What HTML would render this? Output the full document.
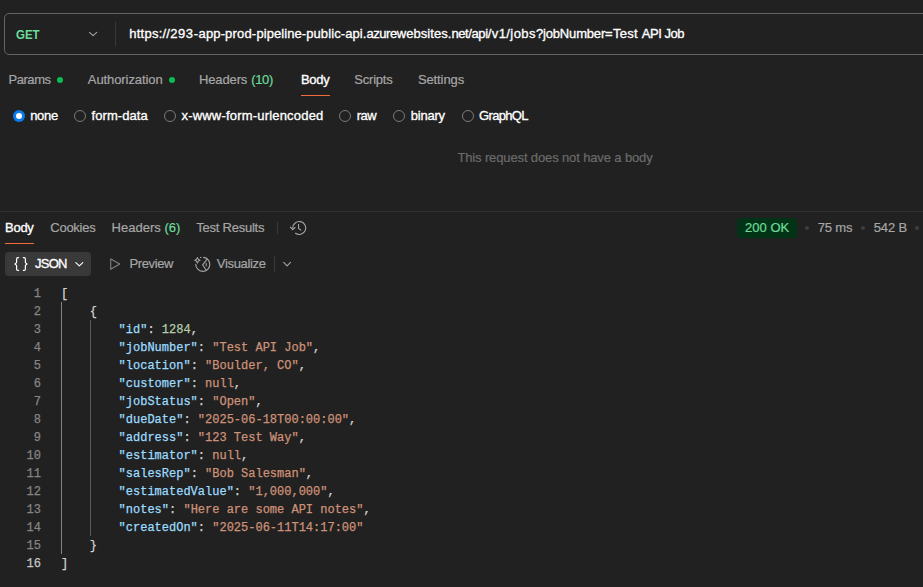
<!DOCTYPE html>
<html lang="en">
<head>
<meta charset="utf-8">
<title>Request</title>
<style>
*{box-sizing:border-box;margin:0;padding:0}
html,body{width:923px;height:587px;overflow:hidden;background:#212121}
body{position:relative;font-family:"Liberation Sans",sans-serif;font-size:13px;color:#a6a6a6}
.t{position:absolute;white-space:nowrap;line-height:16px;height:16px;-webkit-text-stroke:.2px}
.w{color:#ffffff;-webkit-text-stroke:.33px}
.g{color:#6bdd9a}
.urlbar{position:absolute;left:4px;top:13px;width:940px;height:42px;border:1px solid #646464;border-radius:5px}
.vdiv{position:absolute;width:1px;background:#393939}
.dot{position:absolute;width:6px;height:6px;border-radius:50%;background:#0cbb52}
.ul{position:absolute;height:1px;background:#f26b3a}
.radio{position:absolute;width:12px;height:12px;border-radius:50%;border:1px solid #7a7a7a}
.radio.on{border:none;background:#097bed}
.radio.on::after{content:"";position:absolute;left:3px;top:3px;width:6px;height:6px;border-radius:50%;background:#fff}
.hr{position:absolute;left:0;width:923px;height:1px;background:#303030}
.sdot{position:absolute;width:4px;height:4px;border-radius:50%;background:#3f3f3f}
.badge{position:absolute;left:737px;top:218px;width:60px;height:20px;border-radius:4px;background:#033316}
.jbtn{position:absolute;left:5px;top:252px;width:86px;height:24px;border-radius:4px;background:#393939}
svg{position:absolute;overflow:visible}
.code{position:absolute;left:0;top:285px;font-family:"Liberation Mono",monospace;font-size:12px;line-height:18px;-webkit-text-stroke:.25px}
.ln.cur{color:#c6c6c6}
.ln{position:absolute;left:0;width:41px;text-align:right;color:#858585;height:18px;white-space:pre}
.cl{position:absolute;left:61px;height:18px;white-space:pre;color:#d4d4d4}
.k{color:#9cdcfe}.s{color:#ce9178}.n{color:#b5cea8}.p{color:#d4d4d4}
.guide{position:absolute;width:1px;background:#404040}
</style>
</head>
<body>
<div class="urlbar"></div>
<div class="t g" id="get" style="left:16.3px;top:27px;font-weight:bold;-webkit-text-stroke:0;transform:scaleX(.885);transform-origin:0 0">GET</div>
<div class="vdiv" style="left:115px;top:22px;height:24px"></div>
<div class="t w" id="url" style="left:129.3px;top:26px;white-space:pre"><span style="letter-spacing:0.234px">https://</span><span style="letter-spacing:0.592px">293-</span><span style="letter-spacing:0.117px">app-</span><span style="letter-spacing:0.188px">prod-</span><span style="letter-spacing:0.072px">pipeline-</span><span style="letter-spacing:0.100px">public-</span><span style="letter-spacing:0.058px">api.</span><span style="letter-spacing:-0.446px">azure</span><span style="letter-spacing:0.066px">websites.</span><span style="letter-spacing:-0.459px">net</span><span style="letter-spacing:-0.342px">/api</span><span style="letter-spacing:0.385px">/v1</span><span style="letter-spacing:0.446px">/jobs</span><span style="letter-spacing:-0.173px">?jobNumber</span><span style="letter-spacing:0.279px">=Test </span><span style="letter-spacing:-0.476px">API Job</span></div>

<div class="t" id="t1" style="left:8.4px;top:72px;letter-spacing:-0.42px">Params</div>
<div class="dot" style="left:57px;top:77px"></div>
<div class="t" id="t2" style="left:87.8px;top:72px;letter-spacing:-0.08px">Authorization</div>
<div class="dot" style="left:169px;top:77px"></div>
<div class="t" id="t3" style="left:199px;top:72px;letter-spacing:-0.13px">Headers <span class="g" style="letter-spacing:-.4px;margin-left:.6px">(10)</span></div>
<div class="t w" id="t4" style="left:301px;top:72px;letter-spacing:-0.3px">Body</div>
<div class="ul" style="left:301px;top:95px;width:29px"></div>
<div class="t" id="t5" style="left:354.3px;top:72px;letter-spacing:-0.22px">Scripts</div>
<div class="t" id="t6" style="left:417.9px;top:72px;letter-spacing:-0.1px">Settings</div>

<div class="radio on" style="left:13px;top:110px"></div>
<div class="t w" id="r1" style="left:30.2px;top:108px;letter-spacing:-0.3px">none</div>
<div class="radio" style="left:74px;top:110px"></div>
<div class="t w" id="r2" style="left:91.6px;top:108px;letter-spacing:0.07px">form-data</div>
<div class="radio" style="left:164px;top:110px"></div>
<div class="t w" id="r3" style="left:181.5px;top:108px;letter-spacing:0.19px">x-www-form-urlencoded</div>
<div class="radio" style="left:339px;top:110px"></div>
<div class="t w" id="r4" style="left:356.8px;top:108px;letter-spacing:-0.6px">raw</div>
<div class="radio" style="left:393px;top:110px"></div>
<div class="t w" id="r5" style="left:410.8px;top:108px;letter-spacing:-0.24px">binary</div>
<div class="radio" style="left:462px;top:110px"></div>
<div class="t w" id="r6" style="left:479.1px;top:108px;letter-spacing:-0.7px">GraphQL</div>

<div class="t" id="nobody" style="left:457.4px;top:150px;color:#6b6b6b;letter-spacing:-0.13px">This request does not have a body</div>

<div class="hr" style="top:211px"></div>

<div class="t w" id="b1" style="left:5.1px;top:220px;letter-spacing:-0.3px">Body</div>
<div class="ul" style="left:5px;top:243px;width:29px"></div>
<div class="t" id="b2" style="left:50.3px;top:220px;letter-spacing:-0.26px">Cookies</div>
<div class="t" id="b3" style="left:111.5px;top:220px;letter-spacing:0.03px">Headers <span class="g">(6)</span></div>
<div class="t" id="b4" style="left:196.3px;top:220px;letter-spacing:-0.24px">Test Results</div>
<div class="vdiv" style="left:277px;top:222px;height:12px"></div>

<div class="badge"></div>
<div class="t g" id="ok" style="left:745.1px;top:220px">200 OK</div>
<div class="sdot" style="left:805px;top:226px"></div>
<div class="t" id="ms" style="left:817.8px;top:220px;letter-spacing:-0.2px">75 ms</div>
<div class="sdot" style="left:861px;top:226px"></div>
<div class="t" id="sz" style="left:873.7px;top:220px;letter-spacing:-0.1px">542 B</div>
<div class="sdot" style="left:915px;top:226px"></div>

<div class="jbtn"></div>
<div class="t w" id="json" style="left:35.1px;top:256px;letter-spacing:-0.78px">JSON</div>
<div class="t" id="prev" style="left:129.6px;top:256px;letter-spacing:-0.4px">Preview</div>
<div class="t" id="vis" style="left:216.8px;top:256px;letter-spacing:-0.32px">Visualize</div>
<div class="vdiv" style="left:274px;top:256px;height:16px"></div>

<div class="guide" style="left:61px;top:302px;height:252px;background:#858585"></div>
<div class="guide" style="left:90px;top:320px;height:216px;background:#595959"></div>
<div class="code" id="code">
<div class="ln" style="top:0px">1</div>
<div class="cl" style="top:0px"><span class="p">[</span></div>
<div class="ln" style="top:18px">2</div>
<div class="cl" style="top:18px">    <span class="p">{</span></div>
<div class="ln" style="top:36px">3</div>
<div class="cl" style="top:36px">        <span class="k">&quot;id&quot;</span><span class="p">: </span><span class="n">1284</span><span class="p">,</span></div>
<div class="ln" style="top:54px">4</div>
<div class="cl" style="top:54px">        <span class="k">&quot;jobNumber&quot;</span><span class="p">: </span><span class="s">&quot;Test API Job&quot;</span><span class="p">,</span></div>
<div class="ln" style="top:72px">5</div>
<div class="cl" style="top:72px">        <span class="k">&quot;location&quot;</span><span class="p">: </span><span class="s">&quot;Boulder, CO&quot;</span><span class="p">,</span></div>
<div class="ln" style="top:90px">6</div>
<div class="cl" style="top:90px">        <span class="k">&quot;customer&quot;</span><span class="p">: </span><span class="s">null</span><span class="p">,</span></div>
<div class="ln" style="top:108px">7</div>
<div class="cl" style="top:108px">        <span class="k">&quot;jobStatus&quot;</span><span class="p">: </span><span class="s">&quot;Open&quot;</span><span class="p">,</span></div>
<div class="ln" style="top:126px">8</div>
<div class="cl" style="top:126px">        <span class="k">&quot;dueDate&quot;</span><span class="p">: </span><span class="s">&quot;2025-06-18T00:00:00&quot;</span><span class="p">,</span></div>
<div class="ln" style="top:144px">9</div>
<div class="cl" style="top:144px">        <span class="k">&quot;address&quot;</span><span class="p">: </span><span class="s">&quot;123 Test Way&quot;</span><span class="p">,</span></div>
<div class="ln" style="top:162px">10</div>
<div class="cl" style="top:162px">        <span class="k">&quot;estimator&quot;</span><span class="p">: </span><span class="s">null</span><span class="p">,</span></div>
<div class="ln" style="top:180px">11</div>
<div class="cl" style="top:180px">        <span class="k">&quot;salesRep&quot;</span><span class="p">: </span><span class="s">&quot;Bob Salesman&quot;</span><span class="p">,</span></div>
<div class="ln" style="top:198px">12</div>
<div class="cl" style="top:198px">        <span class="k">&quot;estimatedValue&quot;</span><span class="p">: </span><span class="s">&quot;1,000,000&quot;</span><span class="p">,</span></div>
<div class="ln" style="top:216px">13</div>
<div class="cl" style="top:216px">        <span class="k">&quot;notes&quot;</span><span class="p">: </span><span class="s">&quot;Here are some API notes&quot;</span><span class="p">,</span></div>
<div class="ln" style="top:234px">14</div>
<div class="cl" style="top:234px">        <span class="k">&quot;createdOn&quot;</span><span class="p">: </span><span class="s">&quot;2025-06-11T14:17:00&quot;</span></div>
<div class="ln" style="top:252px">15</div>
<div class="cl" style="top:252px">    <span class="p">}</span></div>
<div class="ln cur" style="top:270px">16</div>
<div class="cl" style="top:270px"><span class="p">]</span></div>
</div>
<svg id="icons" style="left:0;top:0" width="923" height="587" viewBox="0 0 923 587" fill="none" stroke-linecap="round" stroke-linejoin="round">
<path d="M89.5 32.4 L93.1 35.7 L96.7 32.4" stroke="#a6a6a6" stroke-width="1.1"/>
<path d="M292.75 228 A6.5 6.5 0 1 1 295.5 233.3" stroke="#a6a6a6" stroke-width="1.1"/>
<path d="M290.4 227.1 L292.7 229.6 L295.1 227.5" stroke="#a6a6a6" stroke-width="1.1"/>
<path d="M298.6 224.2 V228.6 L300.8 230" stroke="#a6a6a6" stroke-width="1.1"/>
<path d="M18.6 257.7 H17.8 Q16.6 257.7 16.6 258.9 V262.6 L15 264 L16.6 265.4 V269.2 Q16.6 270.4 17.8 270.4 H18.6" stroke="#ffffff" stroke-width="1.2"/>
<path d="M23.4 257.7 H24.2 Q25.4 257.7 25.4 258.9 V262.6 L27 264 L25.4 265.4 V269.2 Q25.4 270.4 24.2 270.4 H23.4" stroke="#ffffff" stroke-width="1.2"/>
<path d="M75.8 262.6 L79.3 265.9 L82.8 262.6" stroke="#ffffff" stroke-width="1.1"/>
<path d="M110.7 258.9 L119.8 264.1 L110.7 269.3 Z" stroke="#808080" stroke-width="1.1"/>
<path d="M203.6 257.4 A7 7 0 1 1 195.8 264.4" stroke="#a6a6a6" stroke-width="1.1"/>
<path d="M207.2 259.2 L202.6 264.8 L206.2 270.2" stroke="#a6a6a6" stroke-width="1.1"/>
<path d="M206.2 263.3 Q205.6 264.8 206.2 266.3 Q206.8 264.8 206.2 263.3 Z" fill="#a6a6a6" stroke="#a6a6a6" stroke-width=".5"/>
<path d="M197.4 257.5 Q197.9 259.8 200.1 260.3 Q197.9 260.8 197.4 263.1 Q196.9 260.8 194.7 260.3 Q196.9 259.8 197.4 257.5 Z" stroke="#a6a6a6" stroke-width="1.05"/>
<circle cx="200.7" cy="257.4" r=".7" fill="#a6a6a6"/>
<path d="M283.7 262.4 L287.1 265.8 L290.5 262.4" stroke="#a6a6a6" stroke-width="1.1"/>
</svg>
</body>
</html>
